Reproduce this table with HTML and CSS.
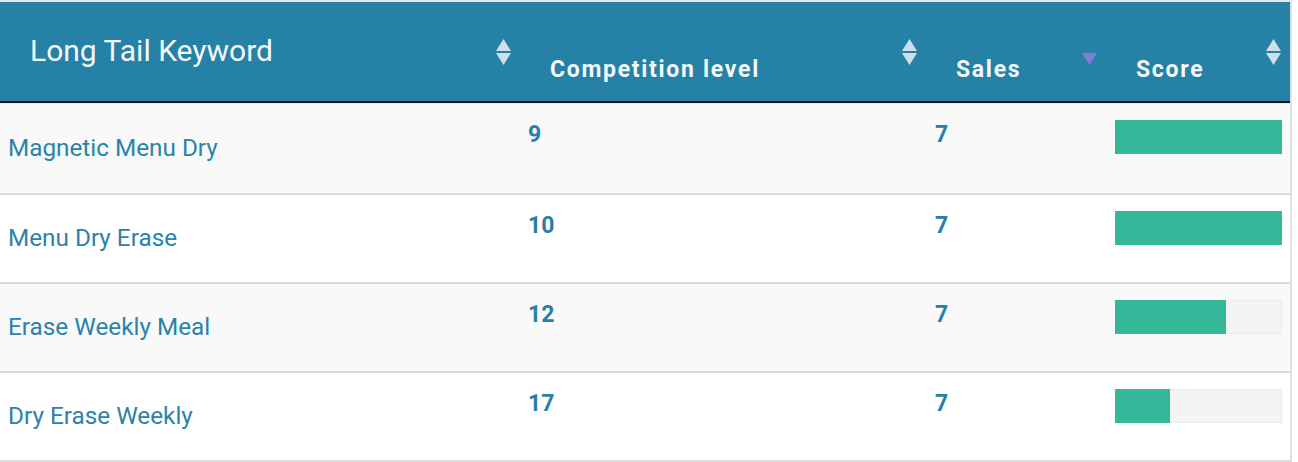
FILE: index.html
```html
<!DOCTYPE html>
<html>
<head>
<meta charset="utf-8">
<link rel="stylesheet" href="styles.css">
</head>
<body>
<div class="table">
  <div class="thead">
    <div class="th c1 first">
      <span class="label">Long Tail Keyword</span>
      <svg class="sort" width="15" height="26" viewBox="0 0 15 26"><polygon points="7.5,0 15,12 0,12"/><polygon points="0,14 15,14 7.5,26"/></svg>
    </div>
    <div class="th c2">
      <span class="label">Competition level</span>
      <svg class="sort" width="15" height="26" viewBox="0 0 15 26"><polygon points="7.5,0 15,12 0,12"/><polygon points="0,14 15,14 7.5,26"/></svg>
    </div>
    <div class="th c3">
      <span class="label">Sales</span>
      <svg class="sort active" width="15" height="26" viewBox="0 0 15 26"><polygon points="0,14 15,14 7.5,26"/></svg>
    </div>
    <div class="th c4">
      <span class="label">Score</span>
      <svg class="sort" width="15" height="26" viewBox="0 0 15 26"><polygon points="7.5,0 15,12 0,12"/><polygon points="0,14 15,14 7.5,26"/></svg>
    </div>
  </div>
  <div class="tbody">
    <div class="tr odd first-row">
      <div class="td c1 kw">Magnetic Menu Dry</div>
      <div class="td c2 num">9</div>
      <div class="td c3 num">7</div>
      <div class="td c4"><div class="bar"><div class="fill" style="width:100%"></div></div></div>
    </div>
    <div class="tr">
      <div class="td c1 kw">Menu Dry Erase</div>
      <div class="td c2 num">10</div>
      <div class="td c3 num">7</div>
      <div class="td c4"><div class="bar"><div class="fill" style="width:100%"></div></div></div>
    </div>
    <div class="tr odd">
      <div class="td c1 kw">Erase Weekly Meal</div>
      <div class="td c2 num">12</div>
      <div class="td c3 num">7</div>
      <div class="td c4"><div class="bar"><div class="fill" style="width:66.5%"></div></div></div>
    </div>
    <div class="tr">
      <div class="td c1 kw">Dry Erase Weekly</div>
      <div class="td c2 num">17</div>
      <div class="td c3 num">7</div>
      <div class="td c4"><div class="bar"><div class="fill" style="width:33%"></div></div></div>
    </div>
  </div>
</div>
</body>
</html>
```

FILE: styles.css
```css
* { box-sizing: border-box; }
html, body { margin: 0; padding: 0; background: #fff; }
body { font-family: Roboto, "Liberation Sans", sans-serif; }

.table {
  width: 1292px;
  border-top: 2px solid #e6e6e6;
  border-right: 2px solid #e0e0e0;
}

.thead {
  display: flex;
  height: 101px;
  background: #2581a6;
  border-bottom: 2px solid #141414;
}

.c1 { width: 520px; }
.c2 { width: 406px; }
.c3 { width: 180px; }
.c4 { width: 184px; }

.th {
  display: flex;
  align-items: center;
  padding-left: 30px;
  padding-right: 9px;
  color: #fff;
}
.th .label {
  flex: 1;
  align-self: flex-end;
  font-weight: 700;
  font-size: 23px;
  letter-spacing: 1.7px;
  line-height: 28px;
  padding-bottom: 17px;
  color: #f4f8fa;
}
.th.first .label {
  align-self: center;
  font-weight: 400;
  font-size: 30px;
  letter-spacing: 0;
  line-height: 34px;
  padding-bottom: 2px;
  color: #f4f8fa;
}
.sort { display: block; fill: rgba(235, 240, 243, 0.85); }
.sort.active { fill: #7d7ed8; }

.tbody { display: flex; flex-direction: column; }
.tr {
  display: flex;
  height: 89px;
  background: #fff;
  border-bottom: 2px solid #dcdcdc;
}
.tr.odd { background: #f9f9f9; }
.tr.first-row { height: 92px; border-top: 1px solid #ececec; }

.td { padding-left: 8px; }
.td.c3, .td.c4 { padding-left: 9px; }
.td.c4 { padding-right: 8px; padding-top: 16px; }

.kw {
  display: flex;
  align-items: center;
  font-size: 24.3px;
  color: #2a84aa;
  padding-bottom: 2px;
}
.num {
  font-size: 23px;
  font-weight: 700;
  color: #2680a8;
  line-height: 32px;
  padding-top: 15px;
}

.bar {
  height: 34px;
  background: #f4f4f4;
  box-shadow: inset 0 0 0 1px #ebebeb;
}
.fill {
  height: 34px;
  background: #33b99a;
}
```
